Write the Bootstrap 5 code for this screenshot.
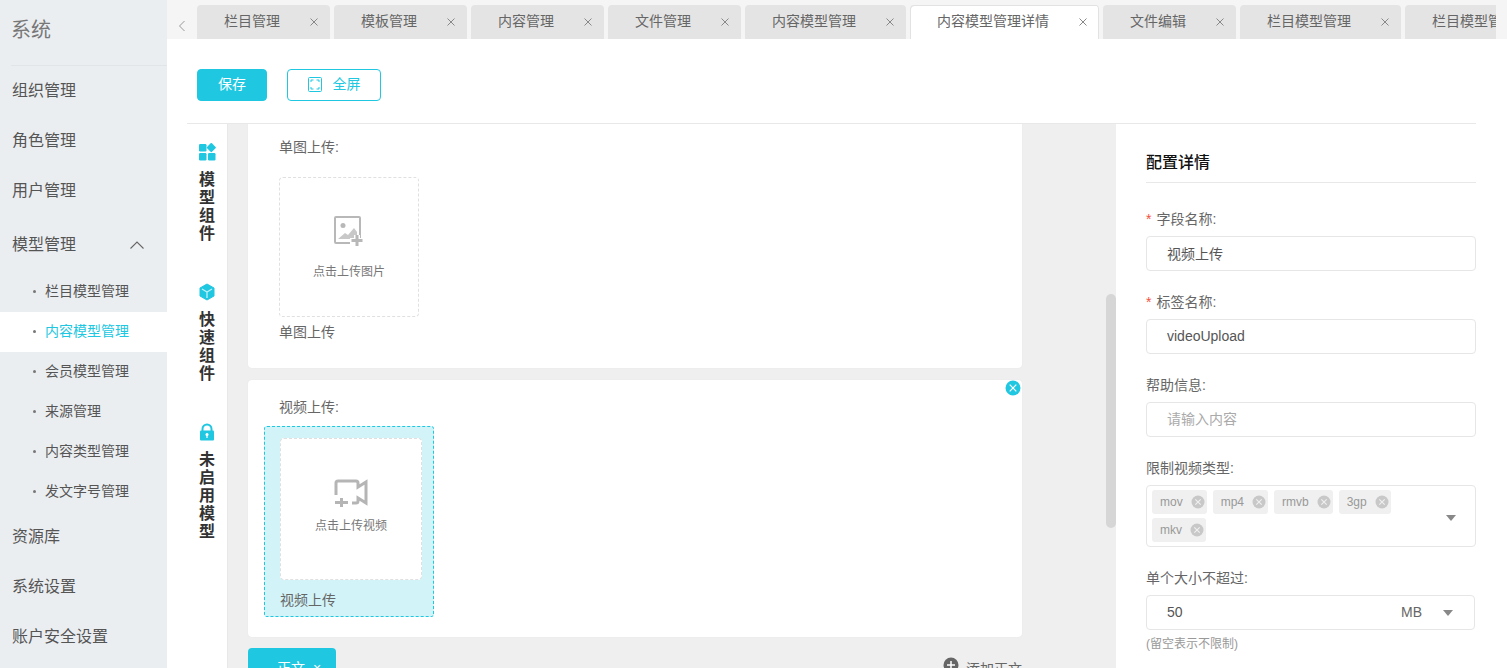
<!DOCTYPE html>
<html lang="zh-CN">
<head>
<meta charset="utf-8">
<title>内容模型管理详情</title>
<link rel="stylesheet" href="https://cdn.jsdelivr.net/npm/bootstrap@5.3.0/dist/css/bootstrap.min.css">
<style>
html,body{height:668px;overflow:hidden}
body{font-family:"Liberation Sans","Noto Sans CJK SC",sans-serif;font-size:14px;color:#666;background:#fff}
.shell{height:668px;width:1507px}
.side{width:167px;flex:none;background:#ebeef1;color:#555}
.side-logo{height:66px;margin-left:11px;border-bottom:1px solid #e2e5e8;font-size:20px;line-height:60px;color:#777}
.side-item{height:50px;line-height:50px;font-size:16px;padding-left:12px}
.side-open{height:56px;line-height:56px;padding-right:22px;padding-top:1px}
.side-sub{height:40px;font-size:14px;padding-left:33px;padding-bottom:2px}
.side-sub::before{content:"";width:3px;height:3px;border-radius:50%;background:#777;margin-right:9px;flex:none}
.side-sub.on{background:#fff;color:#20c7e1}
.content{width:1340px;flex:none;min-width:0}
.tabbar{height:39px;background:#f5f5f5;padding-top:5px;padding-right:11px}
.tab-prev{width:30px;flex:none;padding-left:11px;padding-top:10px}
.tab-list{gap:4px;overflow:hidden}
.tab-one{flex:none;height:34px;padding-left:27px;padding-right:11px;padding-bottom:1px;background:#e4e4e4;border-radius:4px 4px 0 0;white-space:nowrap}
.tab-one.on{background:#fff;box-shadow:inset 1px 1px 0 #e2e2e2,inset -1px 0 0 #e2e2e2}
.tab-x{width:10px;margin-left:29px;flex:none}
.tools{margin-left:20px;margin-right:31px;height:85px;padding-top:30px;padding-left:10px;border-bottom:1px solid #e8e8e8;gap:20px;flex:none}
.tools .btn{height:32px;font-size:14px;border-radius:4px;padding:0 0 2px;line-height:28px}
.btn-save{width:70px;background:#20c7e1;border:1px solid #20c7e1;color:#fff}
.btn-full{width:94px;background:#fff;border:1px solid #20c7e1;color:#20c7e1;gap:11px}
.work{height:544px;min-height:0}
.rail{width:41px;margin-left:20px;border-right:1px solid #e8e8e8;padding-top:19px;padding-left:12px;flex:none;color:#333}
.rail-item{margin-bottom:40px;font-size:16px;font-weight:700;line-height:18px;width:16px;text-align:center}
.rail-item svg{display:block;margin:0 -1px 10px}
.canvas{width:888px;flex:none;background:#efefef;padding-left:20px;overflow:hidden}
.slider{right:0;top:170px;width:10px;height:234px;background:#d6d6d6;border-radius:5px}
.cardish{width:774px;background:#fff;border-radius:0 0 4px 4px;box-shadow:0 0 1px #ddd}
.card-a{height:244px;padding:13px 0 0 31px;margin-bottom:12px}
.card-b{height:257px;padding:17px 0 0 31px;margin-bottom:11px;border-radius:4px}
.drop{border:1px dashed #e0e0e0;border-radius:4px;background:#fff;font-size:12px;color:#777}
.drop-a{width:140px;height:140px;margin-top:19px;margin-bottom:5px;padding-top:37px}
.drop-a p{margin:15px 0 0;line-height:20px}
.pick{width:170px;height:191px;margin:8px 0 0 -15px;padding:11px 0 0 15px;background:#d2f4f9;border:1px dashed #20c7e1;border-radius:3px}
.drop-b{width:142px;height:142px;margin-bottom:10px;padding-top:39px}
.drop-b p{margin:7px 0 0;line-height:20px}
.kill{right:1px;top:0;width:16px;height:16px}
.tail{width:774px;height:40px}
.tail-tab{width:88px;height:40px;background:#20c7e1;color:#fff;border-radius:4px 4px 0 0;padding-left:29px;line-height:40px}
.tail-add{line-height:40px;gap:7px;padding-top:1px}
.panel{width:391px;flex:none;padding:0 31px 0 30px}
.panel-head{font-size:16px;line-height:24px;padding-top:27px;padding-bottom:7px;color:#111;font-weight:500;border-bottom:1px solid #e8e8e8;margin-bottom:26px;height:59px}
.field{margin-bottom:21px}
.field label{display:block;line-height:20px;margin-bottom:7px}
.req{color:#f5503b;margin-right:5px}
.field .form-control{height:35px;padding:0 20px 2px;font-size:14px;color:#555;border:1px solid #e6e6e6;border-radius:4px;box-shadow:none}
.field .form-control::placeholder{color:#aaa}
.multi{height:62px;border:1px solid #e6e6e6;border-radius:4px;padding:4px 40px 4px 5px}
.tag-list{gap:4px 6px}
.tag-one{height:24px;padding:0 2px 0 8px;gap:8px;background:#f0f0f0;border-radius:3px;color:#999;font-size:12px}
.caret{width:0;height:0;border-left:5px solid transparent;border-right:5px solid transparent;border-top:6px solid #888}
.multi .caret{right:19px;top:29px}
.unit{height:35px;width:329px;border:1px solid #e6e6e6;border-radius:4px;padding-left:20px;padding-right:21px;color:#555}
.unit-mb{color:#666;margin-right:21px}
.hint{font-size:12px;color:#999;line-height:16px;margin-top:6px}
</style>
</head>
<body>
<div class="shell d-flex">
  <aside class="side">
    <div class="side-logo">系统</div>
    <div class="side-item">组织管理</div>
    <div class="side-item">角色管理</div>
    <div class="side-item">用户管理</div>
    <div class="side-item side-open d-flex align-items-center justify-content-between">模型管理
      <svg width="16" height="10" viewBox="0 0 16 10"><path d="M1.5 8.5 8 2l6.5 6.5" fill="none" stroke="#666" stroke-width="1.1"/></svg>
    </div>
    <div class="side-sub d-flex align-items-center">栏目模型管理</div>
    <div class="side-sub on d-flex align-items-center">内容模型管理</div>
    <div class="side-sub d-flex align-items-center">会员模型管理</div>
    <div class="side-sub d-flex align-items-center">来源管理</div>
    <div class="side-sub d-flex align-items-center">内容类型管理</div>
    <div class="side-sub d-flex align-items-center">发文字号管理</div>
    <div class="side-item">资源库</div>
    <div class="side-item">系统设置</div>
    <div class="side-item">账户安全设置</div>
  </aside>
  <main class="content d-flex flex-column">
    <div class="tabbar d-flex">
      <div class="tab-prev"><svg width="8" height="12" viewBox="0 0 8 12"><path d="M6.5 1 1.5 6l5 5" fill="none" stroke="#999" stroke-width="1"/></svg></div>
      <div class="tab-list d-flex flex-grow-1">
        <div class="tab-one d-flex align-items-center">栏目管理<svg class="tab-x" viewBox="0 0 10 10" height="10"><path d="M1.5 1.5l7 7m0-7-7 7" stroke="#888" fill="none"/></svg></div>
        <div class="tab-one d-flex align-items-center">模板管理<svg class="tab-x" viewBox="0 0 10 10" height="10"><path d="M1.5 1.5l7 7m0-7-7 7" stroke="#888" fill="none"/></svg></div>
        <div class="tab-one d-flex align-items-center">内容管理<svg class="tab-x" viewBox="0 0 10 10" height="10"><path d="M1.5 1.5l7 7m0-7-7 7" stroke="#888" fill="none"/></svg></div>
        <div class="tab-one d-flex align-items-center">文件管理<svg class="tab-x" viewBox="0 0 10 10" height="10"><path d="M1.5 1.5l7 7m0-7-7 7" stroke="#888" fill="none"/></svg></div>
        <div class="tab-one d-flex align-items-center">内容模型管理<svg class="tab-x" viewBox="0 0 10 10" height="10"><path d="M1.5 1.5l7 7m0-7-7 7" stroke="#888" fill="none"/></svg></div>
        <div class="tab-one on d-flex align-items-center">内容模型管理详情<svg class="tab-x" viewBox="0 0 10 10" height="10"><path d="M1.5 1.5l7 7m0-7-7 7" stroke="#888" fill="none"/></svg></div>
        <div class="tab-one d-flex align-items-center">文件编辑<svg class="tab-x" viewBox="0 0 10 10" height="10"><path d="M1.5 1.5l7 7m0-7-7 7" stroke="#888" fill="none"/></svg></div>
        <div class="tab-one d-flex align-items-center">栏目模型管理<svg class="tab-x" viewBox="0 0 10 10" height="10"><path d="M1.5 1.5l7 7m0-7-7 7" stroke="#888" fill="none"/></svg></div>
        <div class="tab-one d-flex align-items-center">栏目模型管理<svg class="tab-x" viewBox="0 0 10 10" height="10"><path d="M1.5 1.5l7 7m0-7-7 7" stroke="#888" fill="none"/></svg></div>
      </div>
    </div>
    <div class="tools d-flex align-items-start">
      <button class="btn btn-save" type="button">保存</button>
      <button class="btn btn-full d-flex align-items-center justify-content-center" type="button">
        <svg width="14" height="15" viewBox="0 0 14 15" fill="none" stroke="#20c7e1"><rect x=".5" y=".5" width="13" height="14" rx="1"/><path d="M3 5V3h2.500M8.500 3H11v2M11 10v2H8.500M5.500 12H3v-2" stroke-width="1"/></svg>
        <span>全屏</span>
      </button>
    </div>
    <div class="work d-flex">
      <nav class="rail">
        <div class="rail-item">
          <svg width="18" height="18" viewBox="0 0 18 18" fill="#20c7e1"><rect x="1" y="1" width="7.500" height="7.500" rx="1.200"/><rect x="9.800" y="1.100" width="7" height="7" rx="1" transform="rotate(45 13.300 4.600)"/><rect x="1" y="10" width="7.500" height="7.500" rx="1.200"/><rect x="10" y="10" width="7.500" height="7.500" rx="1.200"/></svg>
          模型组件
        </div>
        <div class="rail-item">
          <svg width="18" height="18" viewBox="0 0 18 18"><path d="M9 1l7 4v8l-7 4-7-4V5z" fill="#20c7e1" stroke="#20c7e1" stroke-linejoin="round"/><path d="M4 6l5 3 5-3M9 9v6" fill="none" stroke="#bff0f7" stroke-width="1.300"/></svg>
          快速组件
        </div>
        <div class="rail-item">
          <svg width="18" height="18" viewBox="0 0 18 18"><path d="M4.500 8V6a4.500 4.500 0 0 1 9 0v2" fill="none" stroke="#20c7e1" stroke-width="2"/><rect x="2" y="7.500" width="14" height="10" rx="1" fill="#20c7e1"/><circle cx="9" cy="11.500" r="1.500" fill="#fff"/><rect x="8.400" y="12" width="1.200" height="3" fill="#fff"/></svg>
          未启用模型
        </div>
      </nav>
      <section class="canvas position-relative">
        <div class="cardish card-a">
          <div>单图上传:</div>
          <div class="drop drop-a text-center">
            <svg width="32" height="32" viewBox="0 0 32 32"><rect x="2" y="2" width="25" height="26" rx="1" fill="none" stroke="#b8b8b8" stroke-width="2"/><circle cx="10" cy="10.500" r="2.500" fill="#b8b8b8"/><path d="M5 24l7-6 3 2 6-7 3 4v7z" fill="#c8c8c8"/><path d="M17 26h13M24 20v12" stroke="#fff" stroke-width="6"/><path d="M18.500 25.500h11M24 20v11" stroke="#b8b8b8" stroke-width="3"/></svg>
            <p>点击上传图片</p>
          </div>
          <div>单图上传</div>
        </div>
        <div class="cardish card-b position-relative">
          <svg class="kill position-absolute" viewBox="0 0 16 16"><circle cx="8" cy="8" r="7.500" fill="#20c7e1"/><path d="M4.700 4.700l6.600 6.600m0-6.600-6.600 6.600" stroke="#fff" stroke-width="1.200"/></svg>
          <div>视频上传:</div>
          <div class="pick">
            <div class="drop drop-b text-center">
              <svg width="36" height="31" viewBox="0 0 36 31" fill="none" stroke="#b5b5b5" stroke-width="3"><path d="M3 17V5a2 2 0 0 1 2-2h18a2 2 0 0 1 2 2v4l8-5v21l-8-5v3a2 2 0 0 1-2 2h-4"/><path d="M2 24.500h13M8.500 20v9"/></svg>
              <p>点击上传视频</p>
            </div>
            <div>视频上传</div>
          </div>
        </div>
        <div class="tail d-flex justify-content-between">
          <div class="tail-tab">正文<span class="ms-2">×</span></div>
          <div class="tail-add d-flex">
            <svg class="mt-2" width="16" height="16" viewBox="0 0 16 16"><circle cx="8" cy="8" r="7.500" fill="#666"/><path d="M8 4v8M4 8h8" stroke="#fff" stroke-width="1.500"/></svg>
            <span>添加正文</span>
          </div>
        </div>
        <div class="slider position-absolute"></div>
      </section>
      <section class="panel">
        <div class="panel-head">配置详情</div>
        <div class="field">
          <label><span class="req">*</span>字段名称:</label>
          <input class="form-control" type="text" value="视频上传">
        </div>
        <div class="field">
          <label><span class="req">*</span>标签名称:</label>
          <input class="form-control" type="text" value="videoUpload">
        </div>
        <div class="field">
          <label>帮助信息:</label>
          <input class="form-control" type="text" placeholder="请输入内容">
        </div>
        <div class="field">
          <label>限制视频类型:</label>
          <div class="multi position-relative">
            <div class="tag-list d-flex flex-wrap">
              <span class="tag-one d-inline-flex align-items-center">mov<svg width="14" height="14" viewBox="0 0 14 14"><circle cx="7" cy="7" r="6.500" fill="#c8c8c8"/><path d="M4.300 4.300l5.400 5.400m0-5.400-5.400 5.400" stroke="#f0f0f0" stroke-width="1.100"/></svg></span>
              <span class="tag-one d-inline-flex align-items-center">mp4<svg width="14" height="14" viewBox="0 0 14 14"><circle cx="7" cy="7" r="6.500" fill="#c8c8c8"/><path d="M4.300 4.300l5.400 5.400m0-5.400-5.400 5.400" stroke="#f0f0f0" stroke-width="1.100"/></svg></span>
              <span class="tag-one d-inline-flex align-items-center">rmvb<svg width="14" height="14" viewBox="0 0 14 14"><circle cx="7" cy="7" r="6.500" fill="#c8c8c8"/><path d="M4.300 4.300l5.400 5.400m0-5.400-5.400 5.400" stroke="#f0f0f0" stroke-width="1.100"/></svg></span>
              <span class="tag-one d-inline-flex align-items-center">3gp<svg width="14" height="14" viewBox="0 0 14 14"><circle cx="7" cy="7" r="6.500" fill="#c8c8c8"/><path d="M4.300 4.300l5.400 5.400m0-5.400-5.400 5.400" stroke="#f0f0f0" stroke-width="1.100"/></svg></span>
              <span class="tag-one d-inline-flex align-items-center">mkv<svg width="14" height="14" viewBox="0 0 14 14"><circle cx="7" cy="7" r="6.500" fill="#c8c8c8"/><path d="M4.300 4.300l5.400 5.400m0-5.400-5.400 5.400" stroke="#f0f0f0" stroke-width="1.100"/></svg></span>
            </div>
            <span class="caret position-absolute"></span>
          </div>
        </div>
        <div class="field">
          <label>单个大小不超过:</label>
          <div class="unit d-flex align-items-center">
            <span class="flex-grow-1">50</span>
            <span class="unit-mb">MB</span>
            <span class="caret"></span>
          </div>
          <div class="hint">(留空表示不限制)</div>
        </div>
      </section>
    </div>
  </main>
</div>
<script src="https://cdn.jsdelivr.net/npm/bootstrap@5.3.0/dist/js/bootstrap.bundle.min.js"></script>
</body>
</html>
